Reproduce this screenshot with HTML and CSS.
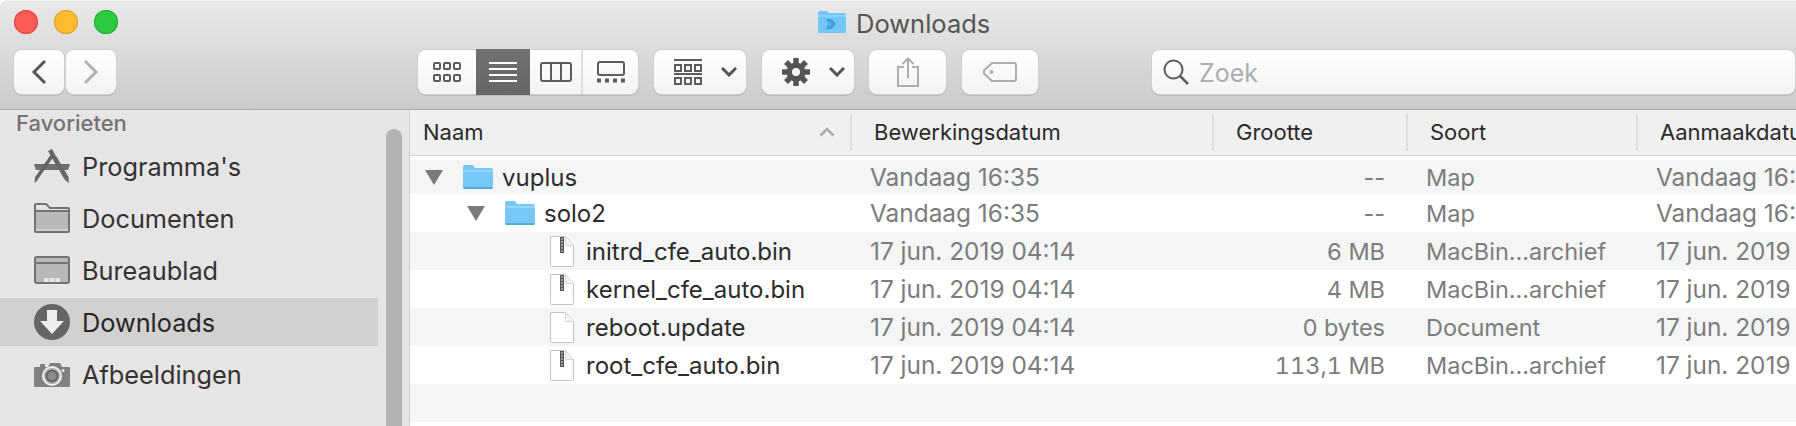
FILE: index.html
```html
<!DOCTYPE html>
<html lang="nl">
<head>
<meta charset="utf-8">
<title>Downloads</title>
<link rel="stylesheet" href="styles.css">
</head>
<body>
<div class="window">
  <header class="toolbar">
    <div class="titlebar">
      <div class="lights">
        <span class="light red"></span><span class="light yellow"></span><span class="light green"></span>
      </div>
      <div class="title">
        <svg class="title-icon" width="30" height="24" viewBox="0 0 30 24"><path d="M1 3a2 2 0 0 1 2-2h7l2 2h15a2 2 0 0 1 2 2v17a2 2 0 0 1-2 1H2a1 1 0 0 1-1-1z" fill="#72c6f8"/><path d="M1 5h28v2H1z" fill="#8ed3fb"/><path d="M9 9h6l4 5-4 5H9l2.500-5z M13 12h-1l1 2-1 2h1l1.500-2z" fill="#3fa0e0" fill-rule="evenodd"/></svg>
        <span class="title-text">Downloads</span>
      </div>
    </div>
    <div class="tools">
      <div class="nav">
        <button class="btn nav-btn"><svg width="16" height="26" viewBox="0 0 16 26"><path d="M14 2L3 13l11 11" fill="none" stroke="#555" stroke-width="3"/></svg></button>
        <button class="btn nav-btn"><svg width="16" height="26" viewBox="0 0 16 26"><path d="M2 2l11 11L2 24" fill="none" stroke="#b2b2b2" stroke-width="3"/></svg></button>
      </div>
      <div class="segments btn">
        <div class="seg seg-a"><svg width="28" height="20" viewBox="0 0 28 20" fill="none" stroke="#5c5c5c" stroke-width="2"><rect x="1" y="1" width="6" height="6" rx="1"/><rect x="11" y="1" width="6" height="6" rx="1"/><rect x="21" y="1" width="6" height="6" rx="1"/><rect x="1" y="13" width="6" height="6" rx="1"/><rect x="11" y="13" width="6" height="6" rx="1"/><rect x="21" y="13" width="6" height="6" rx="1"/></svg></div>
        <div class="seg seg-b"><svg width="28" height="20" viewBox="0 0 28 20" stroke="#fff" stroke-width="2"><path d="M0 1h28M0 7h28M0 13h28M0 19h28"/></svg></div>
        <div class="seg seg-c"><svg width="32" height="20" viewBox="0 0 32 20" fill="none" stroke="#5c5c5c" stroke-width="2"><rect x="1" y="1" width="30" height="18" rx="2"/><path d="M11 1v18M21 1v18"/></svg></div>
        <div class="seg seg-d"><svg width="28" height="22" viewBox="0 0 28 22" fill="none" stroke="#5c5c5c"><rect x="1" y="1" width="26" height="13" rx="2" stroke-width="2"/><path d="M0 19.500h4M8 19.500h4M16 19.500h4M24 19.500h4" stroke-width="4"/></svg></div>
      </div>
      <button class="btn drop drop-view">
        <svg width="28" height="26" viewBox="0 0 28 26" fill="none" stroke="#5c5c5c" stroke-width="2"><path d="M0 1h28M0 15h28"/><rect x="1" y="6" width="6" height="6"/><rect x="11" y="6" width="6" height="6"/><rect x="21" y="6" width="6" height="6"/><rect x="1" y="19" width="6" height="6"/><rect x="11" y="19" width="6" height="6"/><rect x="21" y="19" width="6" height="6"/></svg>
        <svg width="16" height="10" viewBox="0 0 16 10"><path d="M1 1l7 7 7-7" fill="none" stroke="#555" stroke-width="3"/></svg>
      </button>
      <button class="btn drop drop-gear">
        <svg width="28" height="28" viewBox="0 0 28 28"><path d="M14 0v28M0 14h28M4 4l20 20M24 4L4 24" stroke="#555" stroke-width="5.500"/><circle cx="14" cy="14" r="9.500" fill="#555"/><circle cx="14" cy="14" r="4" fill="#f6f6f6"/></svg>
        <svg width="16" height="10" viewBox="0 0 16 10"><path d="M1 1l7 7 7-7" fill="none" stroke="#555" stroke-width="3"/></svg>
      </button>
      <button class="btn icon-btn btn-share">
        <svg width="22" height="30" viewBox="0 0 22 30" fill="none" stroke="#adadad" stroke-width="2"><path d="M7 10H1v19h20V10h-6M11 21V2M5.500 7L11 1.500 16.500 7"/></svg>
      </button>
      <button class="btn icon-btn btn-tag">
        <svg width="34" height="20" viewBox="0 0 34 20" fill="none" stroke="#adadad" stroke-width="2"><path d="M9 1h22a2 2 0 0 1 2 2v14a2 2 0 0 1-2 2H9l-8-7.500v-3z"/><circle cx="8.500" cy="10" r="2" fill="#adadad" stroke="none"/></svg>
      </button>
      <div class="btn search">
        <svg width="26" height="26" viewBox="0 0 26 26" fill="none" stroke="#5c5c5c"><circle cx="10.500" cy="10.500" r="9" stroke-width="2"/><path d="M17 17l8 8" stroke-width="2.500"/></svg>
        <span class="search-text">Zoek</span>
      </div>
    </div>
  </header>
  <div class="content">
    <aside class="sidebar">
      <div class="side-list">
        <h2 class="side-title">Favorieten</h2>
        <ul class="side-items">
          <li class="side-item">
            <svg width="36" height="34" viewBox="0 0 36 34"><path d="M0 15h36l-2 6H2z" fill="#707070"/><path d="M16 1l17 29" stroke="#666" stroke-width="4.500" fill="none"/><path d="M31 31l4 3-.500-5z" fill="#666"/><path d="M20 4L2 30" stroke="#666" stroke-width="3.500" fill="none"/><path d="M.5 34l.500-5 3 2z" fill="#666"/><path d="M12 7l3-4M22 7l-2-4" stroke="#e6e4e4" stroke-width=".8"/></svg>
            <span class="side-text">Programma's</span>
          </li>
          <li class="side-item">
            <svg width="36" height="30" viewBox="0 0 36 30"><path d="M1 7h34v21a1 1 0 0 1-1 1H2a1 1 0 0 1-1-1z" fill="#b9b8b8"/><path d="M1 26h34v2a1 1 0 0 1-1 1H2a1 1 0 0 1-1-1z" fill="#d0cfcf"/><path d="M1 28V2a1 1 0 0 1 1-1h10l4 4h18a1 1 0 0 1 1 1v22a1 1 0 0 1-1 1H2a1 1 0 0 1-1-1zM1 8h34" fill="none" stroke="#727272" stroke-width="2"/></svg>
            <span class="side-text">Documenten</span>
          </li>
          <li class="side-item">
            <svg width="36" height="28" viewBox="0 0 36 28"><rect x="1" y="1" width="34" height="26" rx="2" fill="#b9b8b8"/><path d="M1 7h34" stroke="#727272" stroke-width="2"/><rect x="1" y="1" width="34" height="26" rx="2" fill="none" stroke="#727272" stroke-width="2"/><path d="M10 22h16v4H10z" fill="#e6e5e5"/><path d="M15 22v4M21 22v4" stroke="#b9b8b8" stroke-width="1"/></svg>
            <span class="side-text">Bureaublad</span>
          </li>
          <li class="side-item active">
            <svg width="36" height="36" viewBox="0 0 36 36"><circle cx="18" cy="18" r="18" fill="#666"/><path d="M13 6h10v11h7L18 30 6 17h7z" fill="#eee"/></svg>
            <span class="side-text">Downloads</span>
          </li>
          <li class="side-item">
            <svg width="36" height="27" viewBox="0 0 36 27"><path d="M1 6h5V3h5v3h3l2-4h10l2 4h7a1 1 0 0 1 1 1v18a1 1 0 0 1-1 1H1a1 1 0 0 1-1-1V7a1 1 0 0 1 1-1z" fill="#808080"/><circle cx="18" cy="15" r="9" fill="#aaa" stroke="#eee" stroke-width="2"/><circle cx="18" cy="15" r="5.500" fill="#8b8b8b" stroke="#5c5c5c" stroke-width="1.500"/><circle cx="29" cy="9.500" r="1.500" fill="#eee"/></svg>
            <span class="side-text">Afbeeldingen</span>
          </li>
        </ul>
      </div>
      <div class="thumb"></div>
    </aside>
    <main class="list">
      <div class="head">
        <div class="hcell hname"><span>Naam</span><svg width="16" height="10" viewBox="0 0 16 10"><path d="M1.500 8.500L8 2l6.500 6.500" fill="none" stroke="#aaa" stroke-width="2.500"/></svg></div>
        <div class="hcell">Bewerkingsdatum</div>
        <div class="hcell">Grootte</div>
        <div class="hcell">Soort</div>
        <div class="hcell">Aanmaakdatum</div>
      </div>
      <div class="rows">
        <div class="row first odd">
          <div class="name level-0"><span class="tri"></span><svg class="folder" width="30" height="24" viewBox="0 0 30 24"><path d="M0 2a2 2 0 0 1 2-2h8l2 3h16a2 2 0 0 1 2 2v17a2 2 0 0 1-2 2H2a2 2 0 0 1-2-2z" fill="#75c8f9"/><path d="M0 5h30v2H0z" fill="#95d7fc"/><path d="M0 22h30a2 2 0 0 1-2 2H2a2 2 0 0 1-2-2z" fill="#56a9dd"/></svg><span>vuplus</span></div>
          <div class="date">Vandaag 16:35</div><div class="size none">--</div><div class="kind">Map</div><div class="date created">Vandaag 16:35</div>
        </div>
        <div class="row">
          <div class="name level-1"><span class="tri"></span><svg class="folder" width="30" height="24" viewBox="0 0 30 24"><path d="M0 2a2 2 0 0 1 2-2h8l2 3h16a2 2 0 0 1 2 2v17a2 2 0 0 1-2 2H2a2 2 0 0 1-2-2z" fill="#75c8f9"/><path d="M0 5h30v2H0z" fill="#95d7fc"/><path d="M0 22h30a2 2 0 0 1-2 2H2a2 2 0 0 1-2-2z" fill="#56a9dd"/></svg><span>solo2</span></div>
          <div class="date">Vandaag 16:35</div><div class="size none">--</div><div class="kind">Map</div><div class="date created">Vandaag 16:35</div>
        </div>
        <div class="row odd">
          <div class="name level-2"><svg class="file" width="24" height="31" viewBox="0 0 24 31"><path d="M.5.500h15l8 9v20a1 1 0 0 1-1 1h-21a1 1 0 0 1-1-1z" fill="#fff" stroke="#c2c2c2"/><path d="M15.500.500v9h8" fill="#f2f2f2" stroke="#d6d6d6"/><path d="M10 1h4v16h-4z" fill="#555"/><path d="M11 3h2M11 6h2M11 9h2M11 12h2M11 15h2" stroke="#ddd"/></svg><span>initrd_cfe_auto.bin</span></div>
          <div class="date">17 jun. 2019 04:14</div><div class="size">6 MB</div><div class="kind">MacBin...archief</div><div class="date created">17 jun. 2019 04:14</div>
        </div>
        <div class="row">
          <div class="name level-2"><svg class="file" width="24" height="31" viewBox="0 0 24 31"><path d="M.5.500h15l8 9v20a1 1 0 0 1-1 1h-21a1 1 0 0 1-1-1z" fill="#fff" stroke="#c2c2c2"/><path d="M15.500.500v9h8" fill="#f2f2f2" stroke="#d6d6d6"/><path d="M10 1h4v16h-4z" fill="#555"/><path d="M11 3h2M11 6h2M11 9h2M11 12h2M11 15h2" stroke="#ddd"/></svg><span>kernel_cfe_auto.bin</span></div>
          <div class="date">17 jun. 2019 04:14</div><div class="size">4 MB</div><div class="kind">MacBin...archief</div><div class="date created">17 jun. 2019 04:14</div>
        </div>
        <div class="row odd">
          <div class="name level-2"><svg class="file" width="24" height="31" viewBox="0 0 24 31"><path d="M.5.500h15l8 9v20a1 1 0 0 1-1 1h-21a1 1 0 0 1-1-1z" fill="#fff" stroke="#c2c2c2"/><path d="M15.500.500v9h8" fill="#f2f2f2" stroke="#d6d6d6"/></svg><span>reboot.update</span></div>
          <div class="date">17 jun. 2019 04:14</div><div class="size">0 bytes</div><div class="kind">Document</div><div class="date created">17 jun. 2019 04:14</div>
        </div>
        <div class="row">
          <div class="name level-2"><svg class="file" width="24" height="31" viewBox="0 0 24 31"><path d="M.5.500h15l8 9v20a1 1 0 0 1-1 1h-21a1 1 0 0 1-1-1z" fill="#fff" stroke="#c2c2c2"/><path d="M15.500.500v9h8" fill="#f2f2f2" stroke="#d6d6d6"/><path d="M10 1h4v16h-4z" fill="#555"/><path d="M11 3h2M11 6h2M11 9h2M11 12h2M11 15h2" stroke="#ddd"/></svg><span>root_cfe_auto.bin</span></div>
          <div class="date">17 jun. 2019 04:14</div><div class="size">113,1 MB</div><div class="kind">MacBin...archief</div><div class="date created">17 jun. 2019 04:14</div>
        </div>
        <div class="row odd"></div>
      </div>
    </main>
  </div>
</div>
</body>
</html>
```

FILE: styles.css
```css
* { box-sizing: border-box; }
html, body { margin: 0; padding: 0; width: 1796px; height: 426px; overflow: hidden; background: #fff; }
body { font-family: Inter, "Liberation Sans", sans-serif; color: #2a2a2a; }
svg { display: block; flex: none; }

.window { width: 1796px; height: 426px; display: flex; flex-direction: column; overflow: hidden; }

/* toolbar */
.toolbar { height: 110px; flex: none; background: linear-gradient(#e9e9e9, #cacaca); border-bottom: 1px solid #a9a9a9; border-top: 1px solid #f1f1f1; border-top-left-radius: 6px; display: flex; flex-direction: column; }
.titlebar { height: 49px; flex: none; display: flex; align-items: flex-start; padding: 9px 0 0 14px; }
.lights { display: flex; gap: 16px; }
.light { width: 24px; height: 24px; border-radius: 50%; display: block; }
.red { background: #fc5b57; box-shadow: inset 0 0 0 1px #e5443f; }
.yellow { background: #fdbc2f; box-shadow: inset 0 0 0 1px #de9f23; }
.green { background: #2ecb42; box-shadow: inset 0 0 0 1px #24a832; }
.title { margin-left: 699px; display: flex; align-items: center; gap: 9px; height: 24px; font-size: 25.500px; color: #555; line-height: 24px; }
.title-text { padding-top: 3px; }

.tools { display: flex; align-items: flex-start; padding-left: 14px; height: 44px; }
.btn { border: 0; padding: 0; margin: 0; height: 44px; background: linear-gradient(#fff, #f3f3f3); border-radius: 8px; box-shadow: 0 0 0 1px #d0d0d0, 0 1px 0 1px #b9b9b9; display: flex; align-items: center; }
.nav { display: flex; gap: 2px; }
.nav-btn { width: 50px; justify-content: center; }
.segments { margin-left: 302px; width: 220px; overflow: visible; }
.seg { height: 44px; display: flex; align-items: center; justify-content: center; }
.seg-a { width: 58px; }
.seg-b { width: 54px; height: 46px; background: linear-gradient(#707070, #666); }
.seg-c { width: 53px; border-right: 2px solid #dedede; }
.seg-d { width: 55px; }
.drop { width: 92px; justify-content: flex-start; }
.drop-view { margin-left: 16px; padding-left: 20px; gap: 19px; }
.drop-gear { margin-left: 16px; padding-left: 20px; gap: 19px; }
.icon-btn { justify-content: center; }
.btn-share { margin-left: 15px; width: 77px; }
.btn-tag { margin-left: 16px; width: 76px; }
.search { margin-left: 114px; flex: 1; margin-right: 1px; padding-left: 11px; gap: 10px; font-size: 25px; color: #adadad; }
.search-text { padding-top: 2px; }

/* content */
.content { flex: 1; display: flex; min-height: 0; }
.sidebar { width: 410px; flex: none; background: #e6e4e4; border-right: 1px solid #cfcfcf; display: flex; }
.side-list { width: 378px; flex: none; }
.side-title { margin: 0; height: 32px; padding: 1px 0 0 16px; font-size: 22px; line-height: 24px; font-weight: 500; color: #737373; }
.side-items { list-style: none; margin: 0; padding: 0; display: flex; flex-direction: column; gap: 4px; }
.side-item { height: 48px; display: flex; align-items: center; padding-left: 34px; gap: 12px; font-size: 25.300px; color: #333; }
.side-text { padding-top: 1px; }
.side-item.active { background: #d3d1d0; color: #262626; }
.thumb { width: 16px; margin: 19px 0 0 8px; background: #b3b2b2; border-radius: 8px 8px 0 0; }

/* list */
.list { flex: 1; min-width: 0; display: flex; flex-direction: column; }
.head { height: 46px; flex: none; background: #f0f0f0; border-bottom: 1px solid #d2d2d2; display: grid; grid-template-columns: 440px 362px 194px 230px 1fr; font-size: 22px; color: #2a2a2a; }
.hcell { margin: 4px 0 4px; padding: 0 0 2px 22px; border-left: 2px solid #dcdcdc; display: flex; align-items: center; white-space: nowrap; overflow: hidden; }
.hname { border-left: 0; padding: 0 15px 2px 13px; justify-content: space-between; }

.rows { flex: 1; padding-top: 4px; min-height: 0; }
.row { height: 38px; display: grid; grid-template-columns: 460px 340px 175px 230px 1fr; align-items: center; font-size: 23.500px; color: #7c7c7c; white-space: nowrap; }
.row > div { overflow: hidden; }
.date { font-size: 24.400px; }
.size { text-align: right; font-variant-numeric: tabular-nums; }
.none { font-variant-numeric: normal; }
.kind { padding-left: 41px; grid-column: 4; width: 272px; }
.created { grid-column: 5; padding-left: 41px; }
.row.first { height: 34px; }
.odd { background: #f4f5f5; }
.name { display: flex; align-items: center; color: #2c2c2c; font-size: 24px; }
.level-0 { padding-left: 15px; }
.level-1 { padding-left: 57px; }
.level-2 { padding-left: 140px; }
.tri { width: 0; height: 0; border-left: 9px solid transparent; border-right: 9px solid transparent; border-top: 15px solid #7a7a7a; flex: none; }
.folder { margin-left: 20px; margin-right: 9px; }
.file { margin-right: 12px; }
```
